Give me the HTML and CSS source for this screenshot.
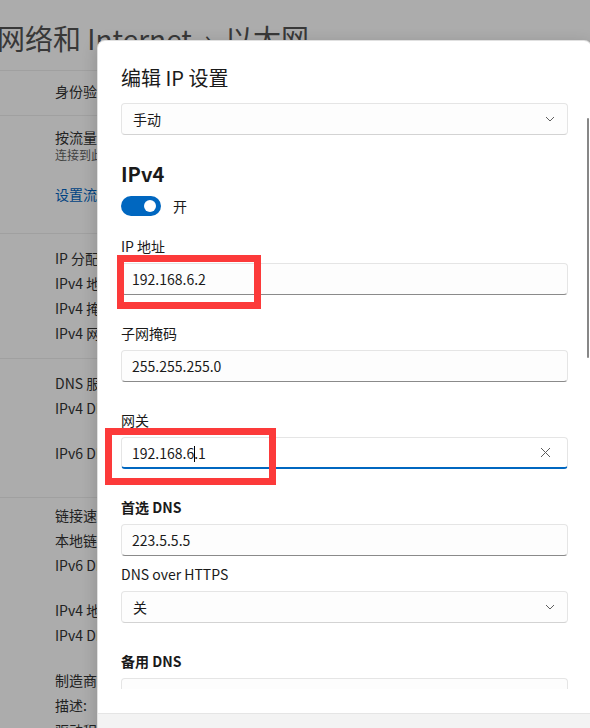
FILE: index.html
```html
<!DOCTYPE html>
<html lang="zh-CN">
<head>
<meta charset="utf-8">
<title>编辑 IP 设置</title>
<link rel="stylesheet" href="styles.css">
</head>
<body>
<div class="page">
  <h1 class="crumb">网络和 Internet <span class="crumb-sep">›</span> 以太网</h1>
  <section class="group group-auth">
    <div class="row">身份验证设置</div>
  </section>
  <section class="group group-metered">
    <div class="row-title">按流量计费的连接</div>
    <div class="row-desc">连接到此网络时，某些应用的工作方式可能会有所不同，以减少数据使用量</div>
    <div class="row-link">设置流量上限以帮助控制此网络上的数据使用量</div>
  </section>
  <section class="group group-ip">
    <div class="row">IP 分配:</div>
    <div class="row">IPv4 地址:</div>
    <div class="row">IPv4 掩码:</div>
    <div class="row">IPv4 网关:</div>
  </section>
  <section class="group group-dns">
    <div class="row">DNS 服务器分配:</div>
    <div class="row">IPv4 DNS 服务器:</div>
    <div class="row row-gap">IPv6 DNS 服务器:</div>
  </section>
  <section class="group group-props">
    <div class="row">链接速度(接收/传输):</div>
    <div class="row">本地链接 IPv6 地址:</div>
    <div class="row">IPv6 DNS 服务器:</div>
    <div class="row row-gap">IPv4 地址:</div>
    <div class="row">IPv4 DNS 服务器:</div>
    <div class="row row-gap">制造商:</div>
    <div class="row">描述:</div>
    <div class="row">驱动程序版本:</div>
  </section>
</div>

<div class="dim"></div>

<div class="dialog">
  <div class="dlg-main">
    <h2 class="dlg-title">编辑 IP 设置</h2>
    <div class="dlg-scroll">
      <div class="combo combo-first">
        <span>手动</span>
        <svg class="chev" width="10" height="6" viewBox="0 0 10 6"><path d="M1 1 L5 5 L9 1" fill="none" stroke="#5f5f5f" stroke-width="1"/></svg>
      </div>

      <h3 class="section">IPv4</h3>
      <div class="toggle-row">
        <span class="toggle"><span class="knob"></span></span>
        <span class="toggle-text">开</span>
      </div>

      <div class="lbl">IP 地址</div>
      <div class="field">192.168.6.2</div>

      <div class="lbl">子网掩码</div>
      <div class="field">255.255.255.0</div>

      <div class="lbl">网关</div>
      <div class="field field-focus">
        <span class="val">192.168.6<span class="caret"></span>.1</span>
        <svg class="clear" width="11" height="11" viewBox="0 0 11 11"><path d="M1 1 L10 10 M10 1 L1 10" fill="none" stroke="#5c5c5c" stroke-width="1"/></svg>
      </div>

      <div class="lbl lbl-strong">首选 DNS</div>
      <div class="field">223.5.5.5</div>

      <div class="lbl lbl-tight">DNS over HTTPS</div>
      <div class="combo">
        <span>关</span>
        <svg class="chev" width="10" height="6" viewBox="0 0 10 6"><path d="M1 1 L5 5 L9 1" fill="none" stroke="#5f5f5f" stroke-width="1"/></svg>
      </div>

      <div class="lbl lbl-strong">备用 DNS</div>
      <div class="field"></div>
    </div>
    <div class="scrollbar"></div>
  </div>
  <div class="dlg-foot">
    <button class="btn btn-primary">保存</button>
    <button class="btn">取消</button>
  </div>
</div>

<div class="mark mark-ip"></div>
<div class="mark mark-gw"></div>
</body>
</html>
```

FILE: styles.css
```css
* { box-sizing: border-box; }

html, body {
  margin: 0;
  padding: 0;
}

body {
  width: 590px;
  height: 728px;
  overflow: hidden;
  position: relative;
  background: #f3f3f3;
  font-family: "Noto Sans CJK SC", "Noto Sans", sans-serif;
  font-size: 14px;
  color: #1a1a1a;
}

/* ---------- background settings page ---------- */
.page {
  width: 590px;
}

.crumb {
  margin: 0 0 0 -3px;
  padding-top: 18px;
  height: 70px;
  font-size: 28px;
  line-height: 40px;
  font-weight: 400;
  color: #505050;
  white-space: nowrap;
}

.crumb-sep {
  display: inline-block;
  margin: 0 6px;
}

.group {
  width: 98px;
  overflow: hidden;
  border-top: 1px solid #e2e2e2;
  padding-left: 55px;
  white-space: nowrap;
  color: #303030;
}

.row {
  height: 25px;
  line-height: 25px;
}

.row-gap { margin-top: 20px; }

.group-auth { height: 45px; padding-top: 8px; }
.group-metered { height: 118px; padding-top: 11px; }
.group-ip { height: 125px; padding-top: 12px; }
.group-dns { height: 139px; padding-top: 12px; }
.group-props { height: 250px; padding-top: 5px; }

.row-title { line-height: 20px; }
.row-desc { font-size: 12px; line-height: 16px; color: #5d5d5d; }
.row-link { margin-top: 21px; line-height: 20px; color: #005fb8; }

.dim {
  position: absolute;
  inset: 0;
  background: rgba(0, 0, 0, 0.29);
}

/* ---------- dialog ---------- */
.dialog {
  position: absolute;
  left: 97px;
  top: 40px;
  width: 495px;
  height: 720px;
  background: #ffffff;
  border-radius: 8px 8px 0 0;
  border: 1px solid rgba(0, 0, 0, 0.12);
  box-shadow: 0 4px 16px rgba(0, 0, 0, 0.18);
  overflow: hidden;
}

.dlg-main {
  position: relative;
  height: 672px;
  padding: 23px 23px 24px 23px;
  display: flex;
  flex-direction: column;
}

.dlg-title {
  margin: 0;
  font-size: 20px;
  line-height: 28px;
  font-weight: 400;
  color: #1a1a1a;
}

.dlg-scroll {
  flex: 1;
  overflow: hidden;
}

.combo,
.field {
  height: 32px;
  width: 447px;
  border: 1px solid #e5e5e5;
  border-radius: 4px;
  background: #fdfdfd;
  padding: 0 10px;
  display: flex;
  align-items: center;
  justify-content: space-between;
  color: #1a1a1a;
}

.combo {
  border-bottom-color: #d3d3d3;
  margin-top: 7px;
  padding-left: 11px;
}

.combo-first { margin-top: 11px; }

.chev {
  margin-right: 2px;
}

.field {
  margin-top: 7px;
  border-bottom-color: #8a8a8a;
}

.field-focus {
  background: #ffffff;
  border-bottom: 2px solid #0067c0;
}

.clear {
  margin-right: 6px;
}

.caret {
  display: inline-block;
  width: 1px;
  height: 16px;
  background: #000;
  vertical-align: -3px;
  margin-right: -1px;
}

.section {
  margin: 25px 0 0;
  font-size: 20px;
  line-height: 28px;
  font-weight: 600;
  color: #1a1a1a;
}

.toggle-row {
  margin-top: 8px;
  height: 20px;
  display: flex;
  align-items: center;
  gap: 12px;
}

.toggle {
  width: 40px;
  height: 20px;
  border-radius: 10px;
  background: #0067c0;
  display: flex;
  align-items: center;
  justify-content: flex-end;
  padding-right: 5px;
}

.knob {
  width: 12px;
  height: 12px;
  border-radius: 50%;
  background: #fff;
}

.lbl {
  margin-top: 28px;
  line-height: 20px;
  height: 20px;
}

.toggle-row + .lbl { margin-top: 20px; }

.lbl-strong { font-weight: 600; }
.lbl-tight { margin-top: 8px; }

.scrollbar {
  position: absolute;
  right: 2px;
  top: 77px;
  width: 2px;
  height: 240px;
  border-radius: 1px;
  background: #878787;
}

.dlg-foot {
  height: 80px;
  background: #f3f3f3;
  border-top: 1px solid #e5e5e5;
  padding: 24px;
  display: flex;
  gap: 8px;
}

.btn {
  flex: 1;
  height: 32px;
  border: 1px solid #e5e5e5;
  border-radius: 4px;
  background: #fbfbfb;
  font: inherit;
}

.btn-primary {
  background: #0067c0;
  color: #fff;
}

/* ---------- annotation marks ---------- */
.mark {
  position: absolute;
  border: 7px solid #fc3a3a;
}

.mark-ip {
  left: 117px;
  top: 255px;
  width: 144px;
  height: 54px;
}

.mark-gw {
  left: 105px;
  top: 428px;
  width: 171px;
  height: 57px;
}
```
